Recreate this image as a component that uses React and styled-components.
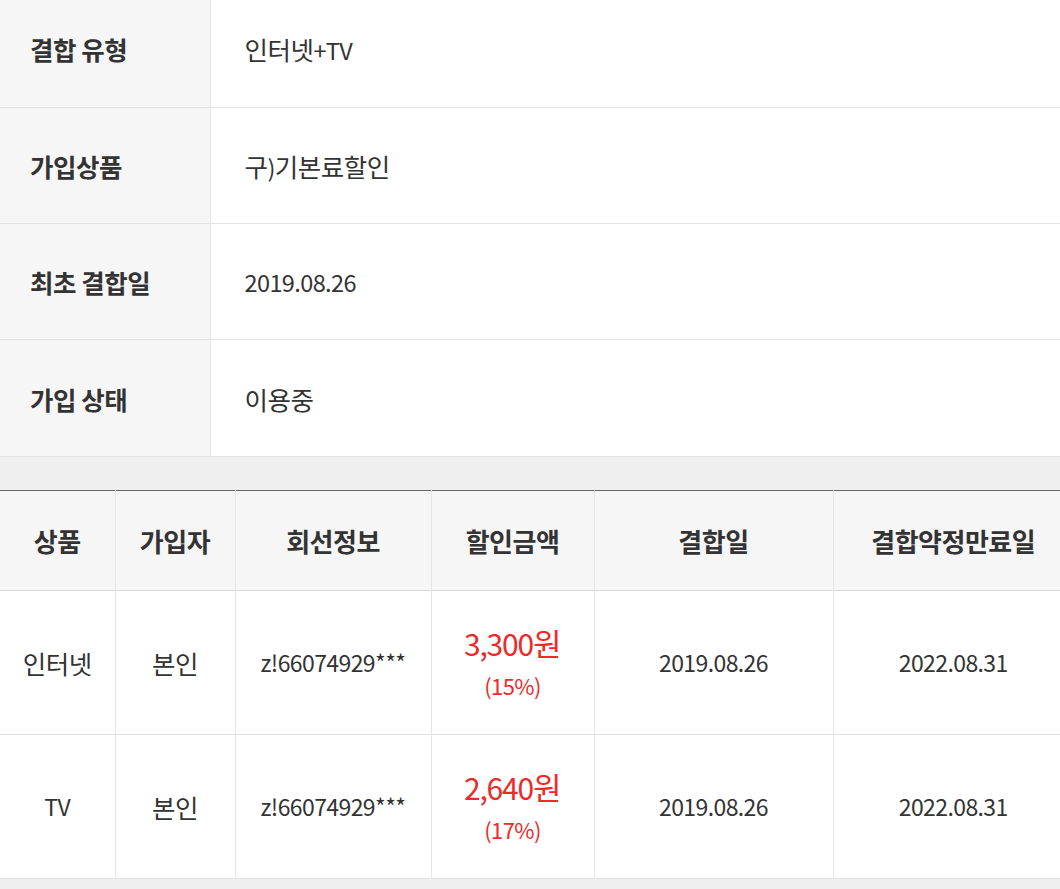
import React from "react";
import styled, { createGlobalStyle } from "styled-components";

const Global = createGlobalStyle`
  html, body { margin: 0; padding: 0; background: #efefef; }
  body { font-family: "Noto Sans CJK KR", "Noto Sans", sans-serif; color: #333; }
`;

const Page = styled.div`
  width: 1060px;
  overflow: hidden;
  background: #efefef;
`;

const InfoTable = styled.table`
  width: 100%;
  border-collapse: collapse;
  table-layout: fixed;
  margin-top: -9px;
  background: #fff;
`;

const InfoRow = styled.tr`
  height: 116.3px;
  border-bottom: 1px solid #e3e3e3;
`;

const Label = styled.th`
  width: 210px;
  box-sizing: border-box;
  background: #f6f6f6;
  border-right: 1px solid #e6e6e6;
  text-align: left;
  padding: 0 0 0 30px;
  font-size: 25.5px;
  font-weight: 700;
  color: #333;
  letter-spacing: -0.5px;
`;

const Value = styled.td`
  padding: 0 0 0 34px;
  font-size: 23.5px;
  color: #333;
  letter-spacing: -0.6px;
`;

/* Hangul runs are set a little larger than Latin/digits, as in the reference */
const Ko = styled.span`
  font-size: ${(p) => p.$size || 25.5}px;
  letter-spacing: -0.5px;
`;

const Spacer = styled.div`
  height: 33px;
  background: #efefef;
`;

const DataTable = styled.table`
  width: 1073px;
  border-collapse: collapse;
  table-layout: fixed;
  background: #fff;
  border-top: 1px solid #666;
`;

const HeadRow = styled.tr`
  height: 100px;
  background: #f6f6f6;
  border-bottom: 1px solid #d8d8d8;
`;

const HeadCell = styled.th`
  font-size: 26px;
  font-weight: 700;
  color: #333;
  text-align: center;
  letter-spacing: -0.5px;
  border-left: 1px solid #e6e6e6;
  padding: 0;
  &:first-child { border-left: none; }
`;

const BodyRow = styled.tr`
  height: 144px;
  border-bottom: 1px solid #e0e0e0;
`;

const Cell = styled.td`
  font-size: 23px;
  color: #333;
  text-align: center;
  letter-spacing: -0.6px;
  border-left: 1px solid #e6e6e6;
  padding: 0;
  &:first-child { border-left: none; }
`;

const Amount = styled.div`
  color: #ee2a2a;
  font-size: 30px;
  letter-spacing: -1.2px;
  line-height: 42px;
  margin-bottom: 4px;
`;

const Rate = styled.div`
  color: #ee2a2a;
  font-size: 22px;
  letter-spacing: -0.6px;
  line-height: 34px;
`;

const info = [
  ["결합 유형", <><Ko>인터넷</Ko>+TV</>],
  ["가입상품", <><Ko>구</Ko>)<Ko>기본료할인</Ko></>],
  ["최초 결합일", "2019.08.26"],
  ["가입 상태", <Ko>이용중</Ko>],
];

const cols = [115, 120, 196, 163, 239, 240];
const heads = ["상품", "가입자", "회선정보", "할인금액", "결합일", "결합약정만료일"];
const rows = [
  [<Ko>인터넷</Ko>, "3,300", "(15%)"],
  ["TV", "2,640", "(17%)"],
];

export default function App() {
  return (
    <Page>
      <Global />
      <InfoTable>
        <tbody>
          {info.map(([k, v]) => (
            <InfoRow key={k}>
              <Label>{k}</Label>
              <Value>{v}</Value>
            </InfoRow>
          ))}
        </tbody>
      </InfoTable>
      <Spacer />
      <DataTable>
        <colgroup>
          {cols.map((w, i) => (
            <col key={i} width={w} />
          ))}
        </colgroup>
        <thead>
          <HeadRow>
            {heads.map((h) => (
              <HeadCell key={h}>{h}</HeadCell>
            ))}
          </HeadRow>
        </thead>
        <tbody>
          {rows.map((r, i) => (
            <BodyRow key={i}>
              <Cell>{r[0]}</Cell>
              <Cell><Ko>본인</Ko></Cell>
              <Cell>z!66074929***</Cell>
              <Cell>
                <Amount>{r[1]}<Ko $size={31}>원</Ko></Amount>
                <Rate>{r[2]}</Rate>
              </Cell>
              <Cell>2019.08.26</Cell>
              <Cell>2022.08.31</Cell>
            </BodyRow>
          ))}
        </tbody>
      </DataTable>
      <Spacer />
    </Page>
  );
}
